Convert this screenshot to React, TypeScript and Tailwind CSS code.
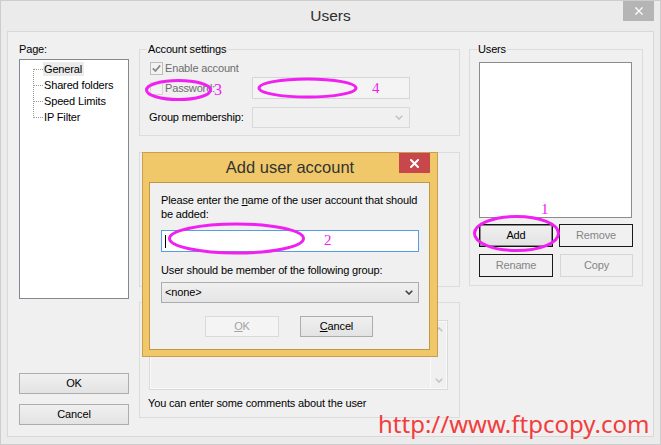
import React from "react";

const btnBase =
  "flex items-center justify-center border bg-linear-to-b from-[#f0f0f0] to-[#e3e3e3]";

function XIcon({ size = 9, width = 1.6 }: { size?: number; width?: number }) {
  return (
    <svg width={size} height={size} viewBox="0 0 9 9">
      <path d="M1 1 L8 8 M8 1 L1 8" stroke="#fff" strokeWidth={width} strokeLinecap="square" />
    </svg>
  );
}

function Chevron({ color, className }: { color: string; className?: string }) {
  return (
    <svg width="8" height="5" viewBox="0 0 8 5" className={className}>
      <path d="M0.7 0.7 L4 4 L7.3 0.7" fill="none" stroke={color} strokeWidth="1.6" />
    </svg>
  );
}

function CheckBox({ checked }: { checked?: boolean }) {
  return (
    <svg width="13" height="13" viewBox="0 0 13 13" className="shrink-0">
      <rect x="0.5" y="0.5" width="12" height="12" fill="#f3f3f3" stroke={checked ? "#bdbdbd" : "#d4d4d4"} />
      {checked && <path d="M2.8 6.4 L5.4 9 L10.2 3.4" fill="none" stroke="#8a8a8a" strokeWidth="1.8" />}
    </svg>
  );
}

function TreeRow({ label, first, last, selected }: { label: string; first?: boolean; last?: boolean; selected?: boolean }) {
  return (
    <div className="flex h-[16px] items-center">
      <svg width="10" height="16" viewBox="0 0 10 16" className="shrink-0" shapeRendering="crispEdges">
        <line x1="0.5" y1={first ? 8 : 0} x2="0.5" y2={last ? 9 : 16} stroke="#9a9a9a" strokeDasharray="1 1" />
        <line x1="1" y1="8.5" x2="10" y2="8.5" stroke="#9a9a9a" strokeDasharray="1 1" />
      </svg>
      <span className={"pl-[1px] pr-[2px] leading-[14px] " + (selected ? "bg-[#ebebeb]" : "")}>{label}</span>
    </div>
  );
}

export default function App() {
  return (
    <div className="relative h-[445px] w-[661px] overflow-hidden border border-[#cdcdcd] bg-[#ebebeb] font-['Liberation_Sans',Arial,sans-serif] text-[11px] tracking-[-0.15px] text-black">
      {/* title bar */}
      <div className="relative flex h-[30px] items-center justify-center">
        <span className="text-[15.5px] tracking-normal text-[#2e2e2e]">Users</span>
        <div className="absolute left-[622px] top-0 flex h-[20px] w-[31px] items-center justify-center bg-[#b5b5b5]">
          <XIcon size={8} width={1.5} />
        </div>
      </div>

      {/* client */}
      <div className="ml-[6px] flex h-[406px] w-[647px] border border-[#d8d8d8] bg-[#f0f0f0]">
        {/* left: pages */}
        <div className="ml-[11px] flex w-[110px] flex-col pt-[9px]">
          <div className="h-[16px] leading-[16px]">Page:</div>
          <div className="mt-[2px] h-[240px] border border-[#828790] bg-white pl-[13px] pt-[1px]">
            <TreeRow label="General" first selected />
            <TreeRow label="Shared folders" />
            <TreeRow label="Speed Limits" />
            <TreeRow label="IP Filter" last />
          </div>
          <div className={`${btnBase} mt-[74px] h-[21px] border-[#adadad]`}>OK</div>
          <div className={`${btnBase} mt-[10px] h-[21px] border-[#adadad]`}>Cancel</div>
        </div>

        {/* middle */}
        <div className="ml-[10px] flex w-[321px] flex-col pt-[9px]">
          <fieldset className="border border-[#dcdcdc] px-[10px] pb-[7px]">
            <legend className="-ml-[3px] px-[1px] leading-[16px]">Account settings</legend>
            <div className="mt-[3px] flex h-[16px] items-center gap-[2px] text-[#6d6d6d]">
              <CheckBox checked />
              <span>Enable account</span>
            </div>
            <div className="mt-[1px] flex h-[22px] items-center">
              <div className="flex w-[102px] items-center gap-[2px] text-[#6d6d6d]">
                <CheckBox />
                <span>Password:</span>
              </div>
              <div className="h-full w-[158px] border border-[#d6d6d6] bg-[#f4f4f4]" />
            </div>
            <div className="mt-[8px] flex h-[21px] items-center">
              <div className="-ml-px w-[103px]">Group membership:</div>
              <div className="flex h-full w-[158px] items-center justify-end border border-[#d9d9d9] bg-[#f0f0f0] pr-[6px]">
                <Chevron color="#c3c3c3" />
              </div>
            </div>
          </fieldset>

          <div className="mt-[16px] h-[135px] border border-[#dcdcdc]" />

          <div className="mt-[15px] h-[116px] border border-[#dcdcdc] pl-[9px] pt-[17px]">
            <div className="flex h-[70px] w-[299px] border border-[#dadada] bg-[#f0f0f0] shadow-[inset_0_0_0_1px_#fafafa]">
              <div className="flex-1" />
              <div className="flex w-[17px] flex-col items-center justify-between border-l border-[#fafafa] py-[6px]">
                <Chevron color="#c4c4c4" className="rotate-180" />
                <Chevron color="#c4c4c4" />
              </div>
            </div>
            <div className="-ml-px mt-[5px] leading-[16px]">You can enter some comments about the user</div>
          </div>
        </div>

        {/* right: users */}
        <div className="ml-[9px] flex w-[174px] flex-col pt-[9px]">
          <fieldset className="border border-[#dcdcdc] pb-[8px] pl-[9px]">
            <legend className="-ml-[2px] px-[1px] leading-[16px]">Users</legend>
            <div className="mt-[5px] h-[156px] w-[153px] border border-[#8c8c8c] bg-white" />
            <div className="mt-[6px] flex h-[23px] gap-[6px]">
              <div className={`${btnBase} w-[74px] border-[#111] shadow-[inset_0_0_0_1px_#8a8a8a]`}>Add</div>
              <div className="flex w-[74px] items-center justify-center border border-[#1a1a1a] bg-[#f0f0f0] text-[#858585]">Remove</div>
            </div>
            <div className="mt-[7px] flex h-[23px] gap-[6px]">
              <div className="flex w-[74px] items-center justify-center border border-[#1a1a1a] bg-[#f0f0f0] text-[#858585]">Rename</div>
              <div className="ml-px flex w-[73px] items-center justify-center border border-[#d6d6d6] bg-[#f0f0f0] text-[#858585]">Copy</div>
            </div>
          </fieldset>
        </div>
      </div>

      {/* Add user account dialog */}
      <div className="absolute left-[141px] top-[151px] flex h-[205px] w-[296px] flex-col border border-[#c6a04c] bg-[#f0c86a]">
        <div className="relative flex h-[29px] shrink-0 items-center justify-center">
          <span className="text-[16.5px] tracking-normal text-[#333]">Add user account</span>
          <div className="absolute left-[256px] top-0 flex h-[20px] w-[31px] items-center justify-center bg-[#c7474a]">
            <XIcon size={9} width={2} />
          </div>
        </div>
        <div className="ml-[6px] flex h-[168px] w-[281px] flex-col border border-[#bf9943] bg-[#f0f0f0] pl-[11px] pt-[10px]">
          <div className="leading-[14px]">
            Please enter the <span className="underline">n</span>ame of the user account that should
            <br />
            be added:
          </div>
          <div className="mt-[9px] flex h-[22px] w-[258px] items-center border border-[#569de5] bg-white pl-[3px]">
            <div className="h-[13px] w-px bg-black" />
          </div>
          <div className="mt-[11px] leading-[14px]">
            User should be member of the following <span className="underline">g</span>roup:
          </div>
          <div className="mt-[5px] flex h-[21px] w-[258px] items-center justify-between border border-[#acacac] bg-linear-to-b from-[#f0f0f0] to-[#e5e5e5] pl-[3px] pr-[5px]">
            <span>&lt;none&gt;</span>
            <Chevron color="#404040" />
          </div>
          <div className="mt-[13px] flex h-[21px] gap-[21px] pl-[44px]">
            <div className="flex w-[74px] items-center justify-center border border-[#d9d9d9] bg-[#f4f4f4] text-[#a3a3a3]">
              <span className="underline">O</span>K
            </div>
            <div className={`${btnBase} w-[73px] border-[#adadad]`}>
              <span className="underline">C</span>ancel
            </div>
          </div>
        </div>
      </div>

      {/* annotations */}
      <div className="pointer-events-none absolute -left-px -top-px h-[445px] w-[661px]">
        <svg width="661" height="445" className="absolute left-0 top-0">
          <g fill="none" stroke="#f020f0" strokeWidth="3">
            <ellipse cx="516.5" cy="233.5" rx="42" ry="17" />
            <ellipse cx="236.5" cy="238.5" rx="67" ry="14.5" />
            <ellipse cx="178.5" cy="90" rx="32" ry="9.5" />
            <ellipse cx="307.5" cy="88" rx="48.5" ry="9" />
          </g>
        </svg>
        <span className="absolute left-[541px] top-[202px] font-['Liberation_Serif',serif] text-[15px] leading-[15px] text-[#f020f0]">1</span>
        <span className="absolute left-[324px] top-[233px] font-['Liberation_Serif',serif] text-[15px] leading-[15px] text-[#f020f0]">2</span>
        <span className="absolute left-[214px] top-[82px] font-['Liberation_Serif',serif] text-[16px] leading-[16px] text-[#f020f0]">3</span>
        <span className="absolute left-[372px] top-[81px] font-['Liberation_Serif',serif] text-[15px] leading-[15px] text-[#f020f0]">4</span>
        <span className="absolute left-[378px] top-[412px] font-['Noto_Sans',sans-serif] text-[24px] leading-[24px] tracking-normal text-[#f23d3d]">
          http://www.ftpcopy.com
        </span>
      </div>
    </div>
  );
}
